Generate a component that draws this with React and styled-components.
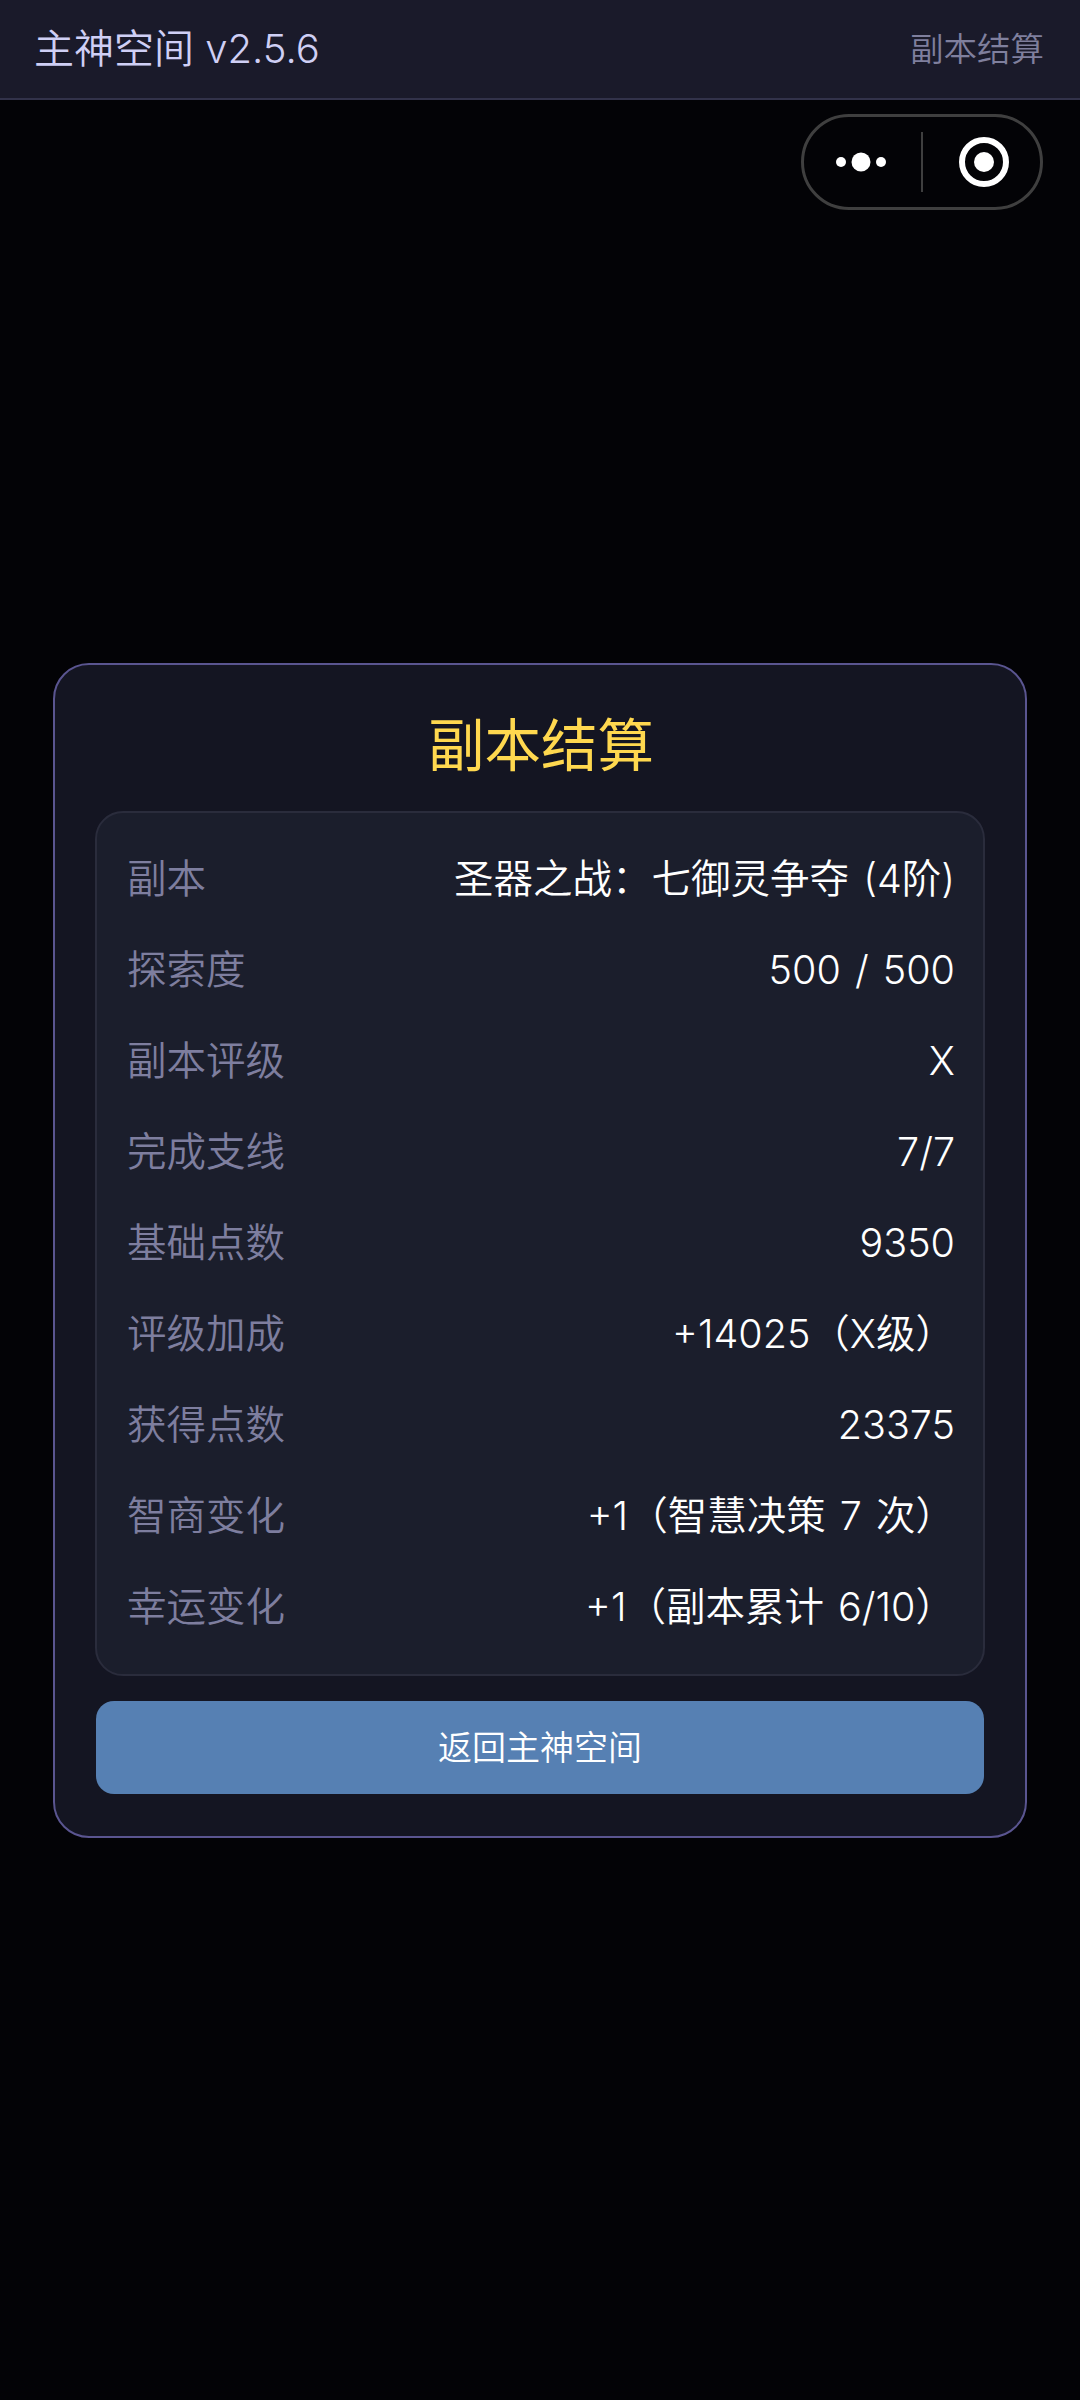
import React from "react";
import styled, { createGlobalStyle } from "styled-components";

const Global = createGlobalStyle`
  html, body { margin: 0; padding: 0; background: #030306; }
  body { font-family: Inter, "Noto Sans CJK SC", "Noto Sans", sans-serif; font-weight: 350; }
  #root { height: 2400px; }
`;

const Page = styled.div`
  position: relative;
  width: 1080px;
  height: 2400px;
  display: flex;
  flex-direction: column;
  background: #030306;
  overflow: hidden;
`;

const Header = styled.header`
  height: 100px;
  flex: none;
  box-sizing: border-box;
  display: flex;
  align-items: center;
  justify-content: space-between;
  padding: 0 36px 0 34px;
  background: #1a1a2a;
  border-bottom: 2px solid #32324a;
`;

const AppTitle = styled.div`
  font-size: 40px;
  line-height: 56px;
  color: #cfcff5;
`;

const PageName = styled.div`
  font-size: 33.5px;
  line-height: 48px;
  color: #7f7f9d;
`;

const Capsule = styled.div`
  position: absolute;
  top: 114px;
  left: 801px;
  width: 242px;
  height: 96px;
  box-sizing: border-box;
  display: flex;
  align-items: center;
  border: 3px solid #3f3f3f;
  border-radius: 48px;
  background: #030306;
`;

const CapsuleCell = styled.div`
  flex: 1;
  height: 100%;
  display: flex;
  align-items: center;
  justify-content: center;
`;

const CapsuleDivider = styled.div`
  width: 2px;
  height: 60px;
  flex: none;
  background: #3f3f3f;
`;

const MoreIcon = styled.svg`
  margin-right: 4px;
`;

const CloseIcon = styled.svg`
  margin-left: 4px;
`;

const Main = styled.main`
  flex: 1;
  display: flex;
  align-items: center;
  justify-content: center;
  padding-top: 1px;
`;

const Card = styled.section`
  width: 974px;
  height: 1175px;
  box-sizing: border-box;
  padding: 41px 41px 41px;
  display: flex;
  flex-direction: column;
  background: #141522;
  border: 2px solid #5a5590;
  border-radius: 36px;
`;

const Title = styled.h1`
  margin: 0 0 25px;
  padding-left: 2px;
  height: 80px;
  font-size: 56.5px;
  line-height: 80px;
  font-weight: 400;
  text-align: center;
  color: #ffd84f;
`;

const Panel = styled.div`
  height: 865px;
  flex: none;
  margin: 0 -1px;
  box-sizing: border-box;
  padding: 20px 28px 20px 30px;
  display: flex;
  flex-direction: column;
  background: #1b1e2c;
  border: 2px solid #2a2c3c;
  border-radius: 28px;
`;

const Row = styled.div`
  height: 91px;
  flex: none;
  display: flex;
  align-items: center;
  justify-content: space-between;
  font-size: 39.5px;
  line-height: 56px;
`;

const Label = styled.span`
  color: #7e7e9f;
`;

const Value = styled.span`
  color: #ffffff;
  word-spacing: 3px;
`;

const ActionButton = styled.button`
  margin-top: 25px;
  height: 93px;
  flex: none;
  padding: 0;
  border: 0;
  border-radius: 18px;
  background: #5680b3;
  color: #ffffff;
  font: inherit;
  font-size: 34px;
  line-height: 48px;
`;

const rows = [
  ["副本", "圣器之战：七御灵争夺 (4阶)"],
  ["探索度", "500 / 500"],
  ["副本评级", "X"],
  ["完成支线", "7/7"],
  ["基础点数", "9350"],
  ["评级加成", "+14025（X级）"],
  ["获得点数", "23375"],
  ["智商变化", "+1（智慧决策 7 次）"],
  ["幸运变化", "+1（副本累计 6/10）"],
];

export default function App() {
  return (
    <Page>
      <Global />
      <Header>
        <AppTitle>主神空间 v2.5.6</AppTitle>
        <PageName>副本结算</PageName>
      </Header>
      <Capsule>
        <CapsuleCell>
          <MoreIcon width="50" height="20" viewBox="0 0 50 20" aria-hidden="true">
            <circle cx="5" cy="10" r="5" fill="#fff" />
            <circle cx="25" cy="10" r="9.5" fill="#fff" />
            <circle cx="45" cy="10" r="5" fill="#fff" />
          </MoreIcon>
        </CapsuleCell>
        <CapsuleDivider />
        <CapsuleCell>
          <CloseIcon width="50" height="50" viewBox="0 0 50 50" aria-hidden="true">
            <circle cx="25" cy="25" r="22" fill="none" stroke="#fff" strokeWidth="6" />
            <circle cx="25" cy="25" r="10" fill="#fff" />
          </CloseIcon>
        </CapsuleCell>
      </Capsule>
      <Main>
        <Card>
          <Title>副本结算</Title>
          <Panel>
            {rows.map(([label, value]) => (
              <Row key={label}>
                <Label>{label}</Label>
                <Value>{value}</Value>
              </Row>
            ))}
          </Panel>
          <ActionButton>返回主神空间</ActionButton>
        </Card>
      </Main>
    </Page>
  );
}
